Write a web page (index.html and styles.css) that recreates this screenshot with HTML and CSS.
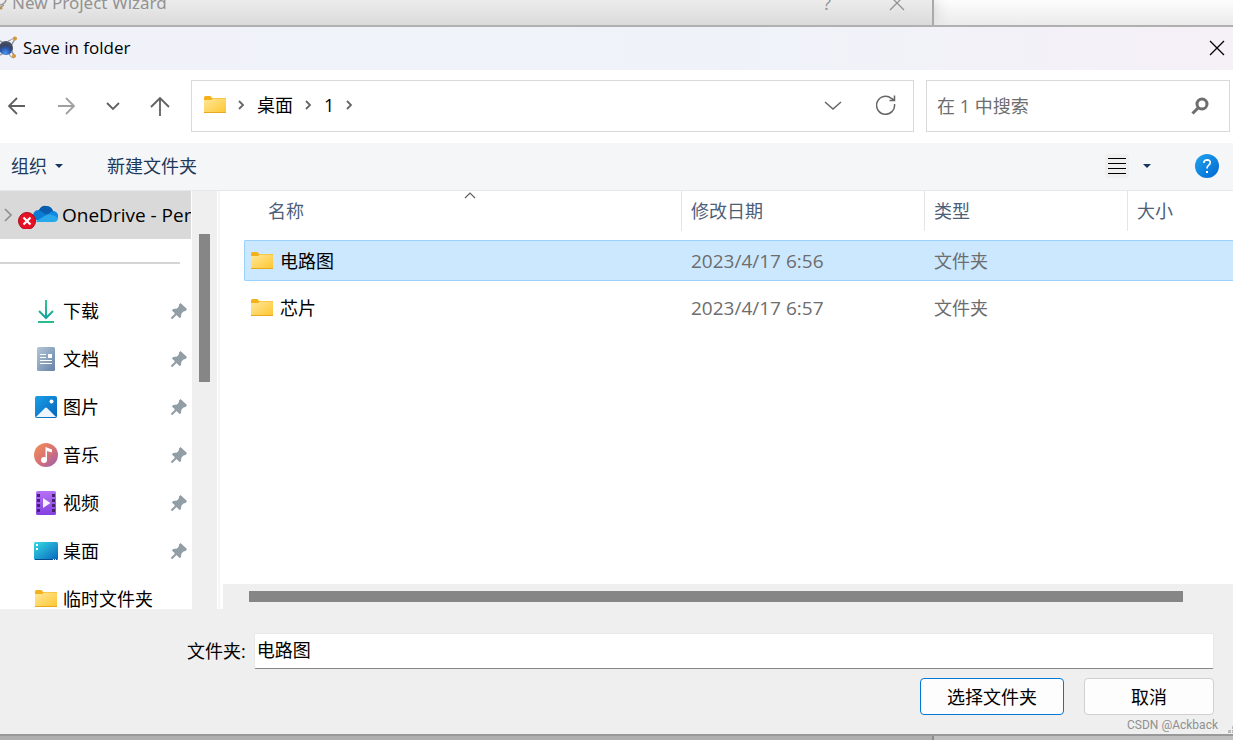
FILE: index.html
```html
<!DOCTYPE html>
<html lang="zh-CN">
<head>
<meta charset="utf-8">
<title>Save in folder</title>
<link rel="stylesheet" href="styles.css">
</head>
<body>
<svg class="defs" aria-hidden="true">
  <defs>
    <linearGradient id="g-folder" x1="0" y1="0" x2="1" y2="1"><stop offset="0" stop-color="#ffe79a"/><stop offset="1" stop-color="#fdc62f"/></linearGradient>
    <linearGradient id="g-down" gradientUnits="userSpaceOnUse" x1="0" y1="0" x2="0" y2="24"><stop offset="0" stop-color="#35c98b"/><stop offset=".8" stop-color="#12a39c"/><stop offset="1" stop-color="#2fc28c"/></linearGradient>
    <linearGradient id="g-doc" x1="0" y1="0" x2="1" y2="1"><stop offset="0" stop-color="#b3c6d8"/><stop offset="1" stop-color="#6583a6"/></linearGradient>
    <linearGradient id="g-pic" x1="0" y1="0" x2="1" y2="1"><stop offset="0" stop-color="#1aa0ea"/><stop offset="1" stop-color="#0663b8"/></linearGradient>
    <linearGradient id="g-music" x1="0" y1="0" x2="1" y2="1"><stop offset="0" stop-color="#f59155"/><stop offset=".5" stop-color="#d87372"/><stop offset="1" stop-color="#9c5db4"/></linearGradient>
    <linearGradient id="g-video" x1="0" y1="0" x2="0" y2="1"><stop offset="0" stop-color="#b571f4"/><stop offset="1" stop-color="#8440e0"/></linearGradient>
    <linearGradient id="g-desk" x1="0" y1="0" x2="1" y2="1"><stop offset="0" stop-color="#36dbe4"/><stop offset="1" stop-color="#0764bd"/></linearGradient>
    <linearGradient id="g-help" x1="0" y1="0" x2="1" y2="1"><stop offset="0" stop-color="#22a4ee"/><stop offset="1" stop-color="#0067d2"/></linearGradient>
    <radialGradient id="g-ball" cx=".45" cy=".85" r=".8"><stop offset="0" stop-color="#4a97f5"/><stop offset=".45" stop-color="#2c55a8"/><stop offset=".7" stop-color="#3a4560"/><stop offset="1" stop-color="#4c5468"/></radialGradient>
  </defs>
  <symbol id="folder" viewBox="0 0 22 18">
    <path d="M0 2Q0 0 1.500 0H6Q7 0 8 2H22V6H0Z" fill="#f5b11a"/>
    <path d="M0 4H7L9 2.500H21.500L22 3V17H0Z" fill="url(#g-folder)"/>
    <path d="M0 16H22V17H0Z" fill="#e9a820"/>
  </symbol>
  <symbol id="pin" viewBox="0 0 16 16">
    <path d="M9.500 0L16 6L14.500 8L12.500 8.500L10.500 10.500L9.800 14.500L8.500 15L5.500 12L1.500 16L0 15.500V14.500L4 10.500L1 7.500L2 6L6 5.500L7.800 3.500L8 1.500Z" fill="#929ea5"/>
  </symbol>
  <symbol id="crumb" viewBox="0 0 7 10"><path d="M1 1L5 5L1 9" fill="none" stroke="#666" stroke-width="1.800"/></symbol>
  <symbol id="caret" viewBox="0 0 8 4"><path d="M0 0H8L4 4Z" fill="#17365f"/></symbol>
  <symbol id="close" viewBox="0 0 16 16"><path d="M1 1L15 15M15 1L1 15" fill="none" stroke="currentColor" stroke-width="1.300"/></symbol>
</svg>

<div class="behind behind-top">
  <div class="wizard">
    <svg class="wizard-logo" viewBox="0 0 7 14"><path d="M0 3Q5 1 6 4Q5 8 0 9M0 12L4 9" fill="none" stroke="#999" stroke-width="1.500"/><circle cx="1" cy="12" r="1.500" fill="#bb8f50"/></svg>
    <span class="wizard-title">New Project Wizard</span>
    <span class="wizard-help">?</span>
    <svg class="i16"><use href="#close"/></svg>
  </div>
</div>

<section class="dialog" aria-label="Save in folder">
  <header class="titlebar">
    <svg class="app-logo" viewBox="0 0 17 24">
      <path d="M0 19Q9 15 15 3M0 5Q9 9 15 21" fill="none" stroke="#9296a0" stroke-width="1.500"/>
      <circle cx="6" cy="12" r="7" fill="url(#g-ball)"/>
      <path d="M8 5Q12 4 15 1M9 18Q11 22 14 22M12 7L16 3M11 15L15 20" fill="none" stroke="#8f939d"/>
      <circle cx="15" cy="2.500" r="2" fill="#d69736"/>
      <circle cx="14" cy="20" r="2" fill="#d69736"/>
    </svg>
    <h1 class="title">Save in folder</h1>
    <button class="plain" aria-label="关闭"><svg class="i16"><use href="#close"/></svg></button>
  </header>

  <nav class="navbar">
    <div class="nav-buttons">
      <button class="plain" aria-label="后退"><svg class="i20" viewBox="0 0 20 20"><path d="M19 10H3M11 2L3 10L11 18" fill="none" stroke="#606060" stroke-width="1.800"/></svg></button>
      <button class="plain" aria-label="前进"><svg class="i20" viewBox="0 0 20 20"><path d="M2 10H18M10 2L18 10L10 18" fill="none" stroke="#a0a0a0" stroke-width="1.800"/></svg></button>
      <button class="plain" aria-label="最近位置"><svg class="i14" viewBox="0 0 14 14"><path d="M1 4L7 10L13 4" fill="none" stroke="#606060" stroke-width="1.800"/></svg></button>
      <button class="plain" aria-label="上移"><svg class="i20" viewBox="0 0 20 20"><path d="M10 20V2M1 11L10 2L19 11" fill="none" stroke="#606060" stroke-width="1.800"/></svg></button>
    </div>
    <div class="address">
      <svg class="folder"><use href="#folder"/></svg>
      <svg class="crumb"><use href="#crumb"/></svg>
      <button class="plain">桌面</button>
      <svg class="crumb"><use href="#crumb"/></svg>
      <button class="plain">1</button>
      <svg class="crumb"><use href="#crumb"/></svg>
      <button class="plain address-drop" aria-label="以前的位置"><svg class="i18" viewBox="0 0 18 18"><path d="M1 6L9 13L17 6" fill="none" stroke="#666" stroke-width="1.500"/></svg></button>
      <button class="plain" aria-label="刷新"><svg class="i20" viewBox="0 0 20 20"><path d="M18.500 9A9 9 0 1 1 15.500 3.500L18 5M18.500 .5V5.500H13.500" fill="none" stroke="#666" stroke-width="1.500"/></svg></button>
    </div>
    <label class="search">
      <input type="search" class="search-input" placeholder="在 1 中搜索" aria-label="在 1 中搜索">
      <svg class="i18" viewBox="0 0 18 18"><circle cx="11" cy="7" r="5" fill="none" stroke="#6d6d6d" stroke-width="3"/><path d="M7.500 10.500L1.500 16.500" stroke="#6d6d6d" stroke-width="3"/></svg>
    </label>
  </nav>

  <div class="toolbar">
    <button class="plain tool">组织 <svg class="caret"><use href="#caret"/></svg></button>
    <button class="plain tool">新建文件夹</button>
    <button class="plain tool view" aria-label="更改视图"><svg class="i24" viewBox="0 0 24 24"><rect width="24" height="24" rx="2" fill="#f0f0f1"/><path d="M3 4.500H21M3 9.500H21M3 14.500H21M3 19.500H21" stroke="#000"/></svg><svg class="caret"><use href="#caret"/></svg></button>
    <button class="plain" aria-label="帮助"><svg class="i24" viewBox="0 0 24 24"><circle cx="12" cy="12" r="12" fill="url(#g-help)"/><path d="M8.800 9Q9 5.800 12.200 5.800Q15.300 5.900 15.200 8.700Q15.100 10.200 13.500 11.400Q12 12.600 12 14.500" fill="none" stroke="#fff" stroke-width="1.700"/><rect x="11" y="17" width="2" height="2" fill="#fff"/></svg></button>
  </div>

  <main class="content">
    <aside class="sidebar">
      <a class="drive" href="#">
        <svg class="drive-icon" viewBox="0 0 58 28">
          <path d="M5 8L11 14L5 20" fill="none" stroke="#909090" stroke-width="1.700"/>
          <path d="M37 19Q32 19 33 14Q34 9 39 9Q41 5 46 5Q51 5 53 10Q58 11 58 15Q58 20 53 20Z" fill="#0b7bd4"/>
          <path d="M39 9Q42 4 46 5Q51 5 53 10L47 14Z" fill="#0a5dae"/>
          <path d="M49 12Q53 9 56 11Q58 13 58 17L50 16Z" fill="#1089df"/>
          <path d="M36 20L48 13Q58 15 58 18Q57 21 54 21H37Z" fill="#28a8ea"/>
          <circle cx="27" cy="20" r="8.500" fill="#e81123" stroke="#a30f1c"/>
          <path d="M23.500 16.500L30.500 23.500M30.500 16.500L23.500 23.500" stroke="#fff" stroke-width="2.200"/>
        </svg>
        <span class="drive-name">OneDrive - Per</span>
      </a>
      <div class="divider"></div>
      <ul class="places">
        <li><a class="place" href="#"><svg class="i24" viewBox="0 0 24 24"><path d="M12 1V18M5 12L12 19L19 12M4 23H20" fill="none" stroke="url(#g-down)" stroke-width="2"/></svg><span>下载</span><svg class="pin"><use href="#pin"/></svg></a></li>
        <li><a class="place" href="#"><svg class="i24" viewBox="0 0 24 24"><rect x="3" width="18" height="24" rx="1.500" fill="url(#g-doc)"/><path d="M6 7.500H12M6 10.500H12M6 13.500H18M6 16.500H18" stroke="#fff"/><rect x="14" y="7" width="4" height="4" fill="#fff"/></svg><span>文档</span><svg class="pin"><use href="#pin"/></svg></a></li>
        <li><a class="place" href="#"><svg class="i24" viewBox="0 0 24 24"><rect x="1" y="1" width="22" height="22" rx="2" fill="url(#g-pic)"/><path d="M2 22L11 13Q12 12 13 13L22 22Z" fill="#edf6ff"/><circle cx="17.500" cy="6.500" r="2" fill="#fff"/></svg><span>图片</span><svg class="pin"><use href="#pin"/></svg></a></li>
        <li><a class="place" href="#"><svg class="i24" viewBox="0 0 24 24"><circle cx="12" cy="12" r="12" fill="url(#g-music)"/><circle cx="10" cy="17" r="3" fill="#fff"/><path d="M11.500 17V4L18 6.500V9.500L13 8V17Z" fill="#fff"/></svg><span>音乐</span><svg class="pin"><use href="#pin"/></svg></a></li>
        <li><a class="place" href="#"><svg class="i24" viewBox="0 0 24 24"><rect x="2" width="20" height="24" rx="1.500" fill="url(#g-video)"/><path d="M3 3H6V6H3ZM3 8H6V11H3ZM3 13H6V16H3ZM3 18H6V21H3ZM18 3H21V6H18ZM18 8H21V11H18ZM18 13H21V16H18ZM18 18H21V21H18Z" fill="#44226d"/><path d="M9 7V17L16.500 12Z" fill="#f4efff"/></svg><span>视频</span><svg class="pin"><use href="#pin"/></svg></a></li>
        <li><a class="place" href="#"><svg class="i24" viewBox="0 0 24 24"><rect y="3" width="24" height="18" rx="1.500" fill="url(#g-desk)"/><path d="M2 5H4V7H2ZM2 9H4V11H2Z" fill="#fff"/><path d="M1 20H23V21H1Z" fill="#064d8f"/><path d="M19 20H20V21H19ZM21 20H22V21H21Z" fill="#fff"/></svg><span>桌面</span><svg class="pin"><use href="#pin"/></svg></a></li>
        <li><a class="place" href="#"><svg class="folder side-folder"><use href="#folder"/></svg><span>临时文件夹</span></a></li>
      </ul>
    </aside>
    <div class="vscroll"><div class="vthumb"></div></div>
    <div class="files">
      <table class="list">
        <thead>
          <tr class="row head">
            <th class="sorted">名称<svg class="sort" viewBox="0 0 12 7"><path d="M1 6L6 1L11 6" fill="none" stroke="#606060" stroke-width="1.200"/></svg></th>
            <th>修改日期</th><th>类型</th><th>大小</th>
          </tr>
        </thead>
        <tbody class="rows">
          <tr class="row item selected"><td class="name"><svg class="folder"><use href="#folder"/></svg>电路图</td><td class="date">2023/4/17 6:56</td><td>文件夹</td><td></td></tr>
          <tr class="row item"><td class="name"><svg class="folder"><use href="#folder"/></svg>芯片</td><td class="date">2023/4/17 6:57</td><td>文件夹</td><td></td></tr>
        </tbody>
      </table>
      <div class="hscroll"><div class="hthumb"></div></div>
    </div>
  </main>

  <footer class="footer">
    <div class="field">
      <label for="folder-name">文件夹:</label>
      <input id="folder-name" class="folder-name" type="text" value="电路图">
    </div>
    <div class="actions">
      <button class="btn primary">选择文件夹</button>
      <button class="btn">取消</button>
    </div>
    <span class="watermark">CSDN @Ackback</span>
    <svg class="grip" viewBox="0 0 5 8"><path d="M0 5H3V8H0ZM4 5H5V8H4ZM4 1H5V4H4Z" fill="#bbb"/></svg>
  </footer>
</section>
<div class="behind behind-bottom"><div class="wizard-edge"></div></div>
</body>
</html>
```

FILE: styles.css
```css
* { box-sizing: border-box; }

body {
  margin: 0;
  height: 100vh;
  display: flex;
  flex-direction: column;
  overflow: hidden;
  font: 400 18px/24px "Open Sans", "Noto Sans CJK SC", sans-serif;
  color: #000;
  background: #fff;
}

button, input { font: inherit; color: inherit; }
svg { display: block; flex: none; }
a { color: inherit; text-decoration: none; }

.defs { position: absolute; width: 0; height: 0; }
.plain { display: flex; align-items: center; padding: 0; border: 0; background: none; white-space: nowrap; }
.i14 { width: 14px; height: 14px; }
.i16 { width: 16px; height: 16px; }
.i18 { width: 18px; height: 18px; }
.i20 { width: 20px; height: 20px; }
.i24 { width: 24px; height: 24px; }
.folder { width: 22px; height: 18px; }
.pin { width: 16px; height: 16px; margin-left: auto; }
.crumb { width: 7px; height: 10px; }
.caret { width: 8px; height: 4px; }

/* Window behind the dialog */
.behind { flex: none; overflow: hidden; }
.behind-top { height: 25px; background: linear-gradient(#fdfdfd, #ebebeb); }
.wizard {
  display: flex;
  align-items: center;
  width: 934px;
  height: 25px;
  padding: 0 27px 20px 0;
  border-right: 2px solid #aaa;
  box-shadow: 0 0 16px #ccc;
  color: #929292;
  background: linear-gradient(#ececec, #dadada);
}
.wizard-logo { width: 7px; height: 14px; }
.wizard-title { margin-left: 5px; font-family: "Noto Sans", sans-serif; font-size: 17px; }
.wizard-help { margin-left: auto; margin-right: 58px; }
.behind-bottom { height: 4px; background: #c0c0c0; }
.wizard-edge { width: 934px; height: 4px; border-right: 2px solid #8c8c8c; background: #afafaf; }

/* Dialog */
.dialog {
  flex: 1;
  min-height: 0;
  display: flex;
  flex-direction: column;
  border-top: 2px solid #b0b0b0;
  border-bottom: 2px solid #999;
}
.titlebar {
  flex: none;
  display: flex;
  align-items: center;
  height: 43px;
  padding: 0 8px 2px 0;
  background: linear-gradient(90deg, #f1f2f9, #eff3f9 60%, #f6f0f7);
}
.app-logo { width: 17px; height: 24px; }
.title { flex: 1; margin: 0 0 0 6px; font-size: 17px; font-weight: 400; }

.navbar {
  flex: none;
  display: flex;
  align-items: center;
  height: 73px;
  padding: 0 3px 1px 0;
}
.nav-buttons { flex: none; display: flex; align-items: center; justify-content: space-between; width: 191px; padding: 0 21px 0 6px; }
.address, .search { display: flex; align-items: center; height: 52px; border: 1px solid #d9d9d9; }
.address { flex: 1; gap: 12px; padding: 0 17px 2px 12px; }
.address-drop { margin-left: auto; margin-right: 22px; }
.search { width: 304px; margin-left: 12px; padding: 0 20px 0 10px; }
.search-input { flex: 1; min-width: 0; padding: 0; border: 0; outline: 0; background: none; }
.search-input::placeholder { color: #6d6d6d; opacity: 1; }

.toolbar {
  flex: none;
  display: flex;
  align-items: center;
  height: 48px;
  padding: 0 14px 2px 11px;
  border-bottom: 1px solid #e5e7e9;
  background: #f4f6f8;
}
.tool { gap: 8px; margin-right: 44px; color: #1e395b; }
.view { gap: 14px; margin-left: auto; }

.content { flex: 1; min-height: 0; display: flex; }

/* Places */
.sidebar { flex: none; width: 192px; overflow: hidden; }
.drive { display: flex; align-items: center; height: 48px; margin-right: 1px; overflow: hidden; background: #d9d9d9; }
.drive-icon { width: 58px; height: 28px; }
.drive-name { margin-left: 4px; font-size: 19px; white-space: nowrap; }
.divider { height: 2px; margin: 23px 12px 23px 0; background: #d5d5d5; }
.places { margin: 0; padding: 0; list-style: none; }
.place { display: flex; align-items: center; gap: 5px; height: 48px; padding: 0 5px 0 34px; }
.side-folder { margin: 0 1px; }

.vscroll { flex: none; width: 25px; padding: 43px 7px 0; background: #efefef; }
.vthumb { height: 148px; background: #868686; }

/* File list */
.files { flex: 1; min-width: 0; display: flex; flex-direction: column; margin-left: 1px; border-left: 2px solid #f6f6f6; }
.list { display: block; flex: 1; min-height: 0; margin-left: 24px; }
.list thead { display: block; }
.row { display: grid; grid-template-columns: 438px 243px 203px 1fr; }
.row th, .row td { display: flex; align-items: center; padding: 0 0 0 9px; font-weight: 400; }
.head { height: 40px; color: #4c607a; }
.head th { border-right: 1px solid #e5e5e5; }
.head th:last-child { border-right: 0; }
.head .sorted { position: relative; padding-left: 24px; }
.sort { position: absolute; top: 1px; left: 220px; width: 12px; height: 7px; }
.rows { display: grid; gap: 6px; margin-top: 9px; }
.item { height: 41px; border: 1px solid transparent; color: #6d6d6d; }
.item td { padding-left: 8px; }
.item .date { font-size: 19px; }
.item.selected { border-color: #99d1ff; border-right: 0; border-radius: 2px 0 0 2px; background: #cce8ff; }
.item .name { gap: 7px; padding-left: 6px; color: #000; }
.hscroll { height: 25px; margin-left: 3px; padding: 7px 50px 7px 26px; background: #efefef; }
.hthumb { height: 11px; background: #868686; }

/* Footer */
.footer { position: relative; flex: none; padding: 24px 19px 19px; background: #efefef; }
.field { display: flex; align-items: center; gap: 8px; padding-left: 168px; }
.folder-name {
  flex: 1;
  min-width: 0;
  height: 36px;
  padding: 0 2px 5px;
  border: 1px solid #e8e8e8;
  border-bottom-color: #868686;
  border-radius: 2px;
  outline: 0;
  background: #fff;
}
.actions { display: flex; justify-content: flex-end; gap: 20px; margin-top: 9px; }
.btn { width: 130px; height: 37px; padding: 0; border: 1px solid #d0d0d0; border-radius: 4px; background: #fdfdfd; }
.primary { width: 144px; border-color: #0078d4; }
.watermark { position: absolute; right: 15px; bottom: 1px; font: 12px/16px Roboto, sans-serif; color: #8f8f8f; }
.grip { position: absolute; right: 0; bottom: 1px; width: 5px; height: 8px; }
```
